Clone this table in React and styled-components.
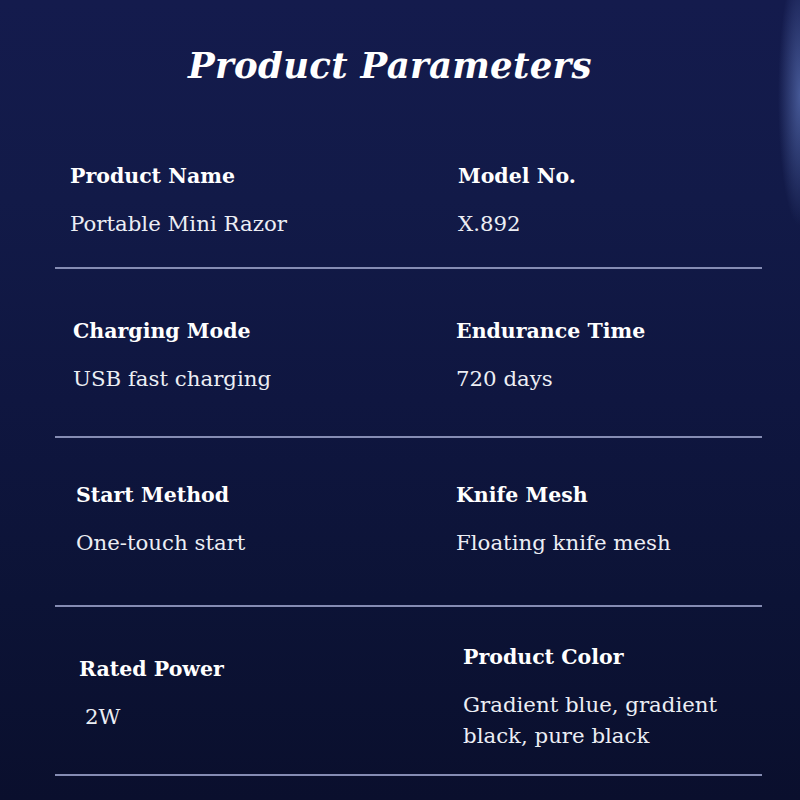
import React from "react";
import styled, { createGlobalStyle } from "styled-components";

const GlobalStyle = createGlobalStyle`
  html, body { margin: 0; padding: 0; background: #0c1236; }
  * { box-sizing: border-box; }
`;

const Page = styled.div`
  width: 800px;
  height: 800px;
  overflow: hidden;
  position: relative;
  font-family: "DejaVu Serif", "Liberation Serif", serif;
  color: #fff;
  background:
    radial-gradient(ellipse 22px 130px at 100% 12%, rgba(120, 150, 225, 0.5), rgba(120, 150, 225, 0) 100%),
    linear-gradient(180deg, #141b4d 0%, #121a48 25%, #0f1640 50%, #0c1336 75%, #0a0f2d 100%);
`;

const Header = styled.header`
  height: 100px;
  display: flex;
  justify-content: center;
  padding-top: 42px;
  padding-right: 20px;
`;

const Title = styled.h1`
  margin: 0;
  font-size: 35.5px;
  line-height: 48px;
  font-weight: 700;
  font-style: italic;
  letter-spacing: 0.3px;
  color: #fff;
`;

const Table = styled.div`
  margin-left: 55px;
  width: 707px;
  display: flex;
  flex-direction: column;
`;

const Row = styled.div`
  display: grid;
  grid-template-columns: 400px 1fr;
  height: ${(p) => p.$h}px;
  border-bottom: 2px solid #858cb3;
`;

const Cell = styled.div`
  padding-top: ${(p) => p.$top}px;
  padding-left: ${(p) => p.$left}px;
  display: flex;
  flex-direction: column;
  gap: 19px;
`;

const Label = styled.div`
  font-size: 20.5px;
  line-height: 26px;
  font-weight: 700;
  color: #fff;
`;

const Value = styled.div`
  font-size: 21.3px;
  line-height: 31px;
  color: #eceef4;
  padding-left: ${(p) => p.$indent || 0}px;
`;

const rows = [
  {
    h: 169,
    cells: [
      { top: 63, left: 15, label: "Product Name", value: "Portable Mini Razor" },
      { top: 63, left: 3, label: "Model No.", value: "X.892" },
    ],
  },
  {
    h: 169,
    cells: [
      { top: 49, left: 18, label: "Charging Mode", value: "USB fast charging" },
      { top: 49, left: 1, label: "Endurance Time", value: "720 days" },
    ],
  },
  {
    h: 169,
    cells: [
      { top: 44, left: 21, label: "Start Method", value: "One-touch start" },
      { top: 44, left: 1, label: "Knife Mesh", value: "Floating knife mesh" },
    ],
  },
  {
    h: 169,
    cells: [
      { top: 49, left: 24, label: "Rated Power", value: "2W", indent: 6 },
      {
        top: 37,
        left: 8,
        label: "Product Color",
        value: (
          <>
            Gradient blue, gradient
            <br />
            black, pure black
          </>
        ),
      },
    ],
  },
];

export default function App() {
  return (
    <>
      <GlobalStyle />
      <Page>
        <Header>
          <Title>Product Parameters</Title>
        </Header>
        <Table>
          {rows.map((r, i) => (
            <Row key={i} $h={r.h}>
              {r.cells.map((c, j) => (
                <Cell key={j} $top={c.top} $left={c.left}>
                  <Label>{c.label}</Label>
                  <Value $indent={c.indent}>{c.value}</Value>
                </Cell>
              ))}
            </Row>
          ))}
        </Table>
      </Page>
    </>
  );
}
